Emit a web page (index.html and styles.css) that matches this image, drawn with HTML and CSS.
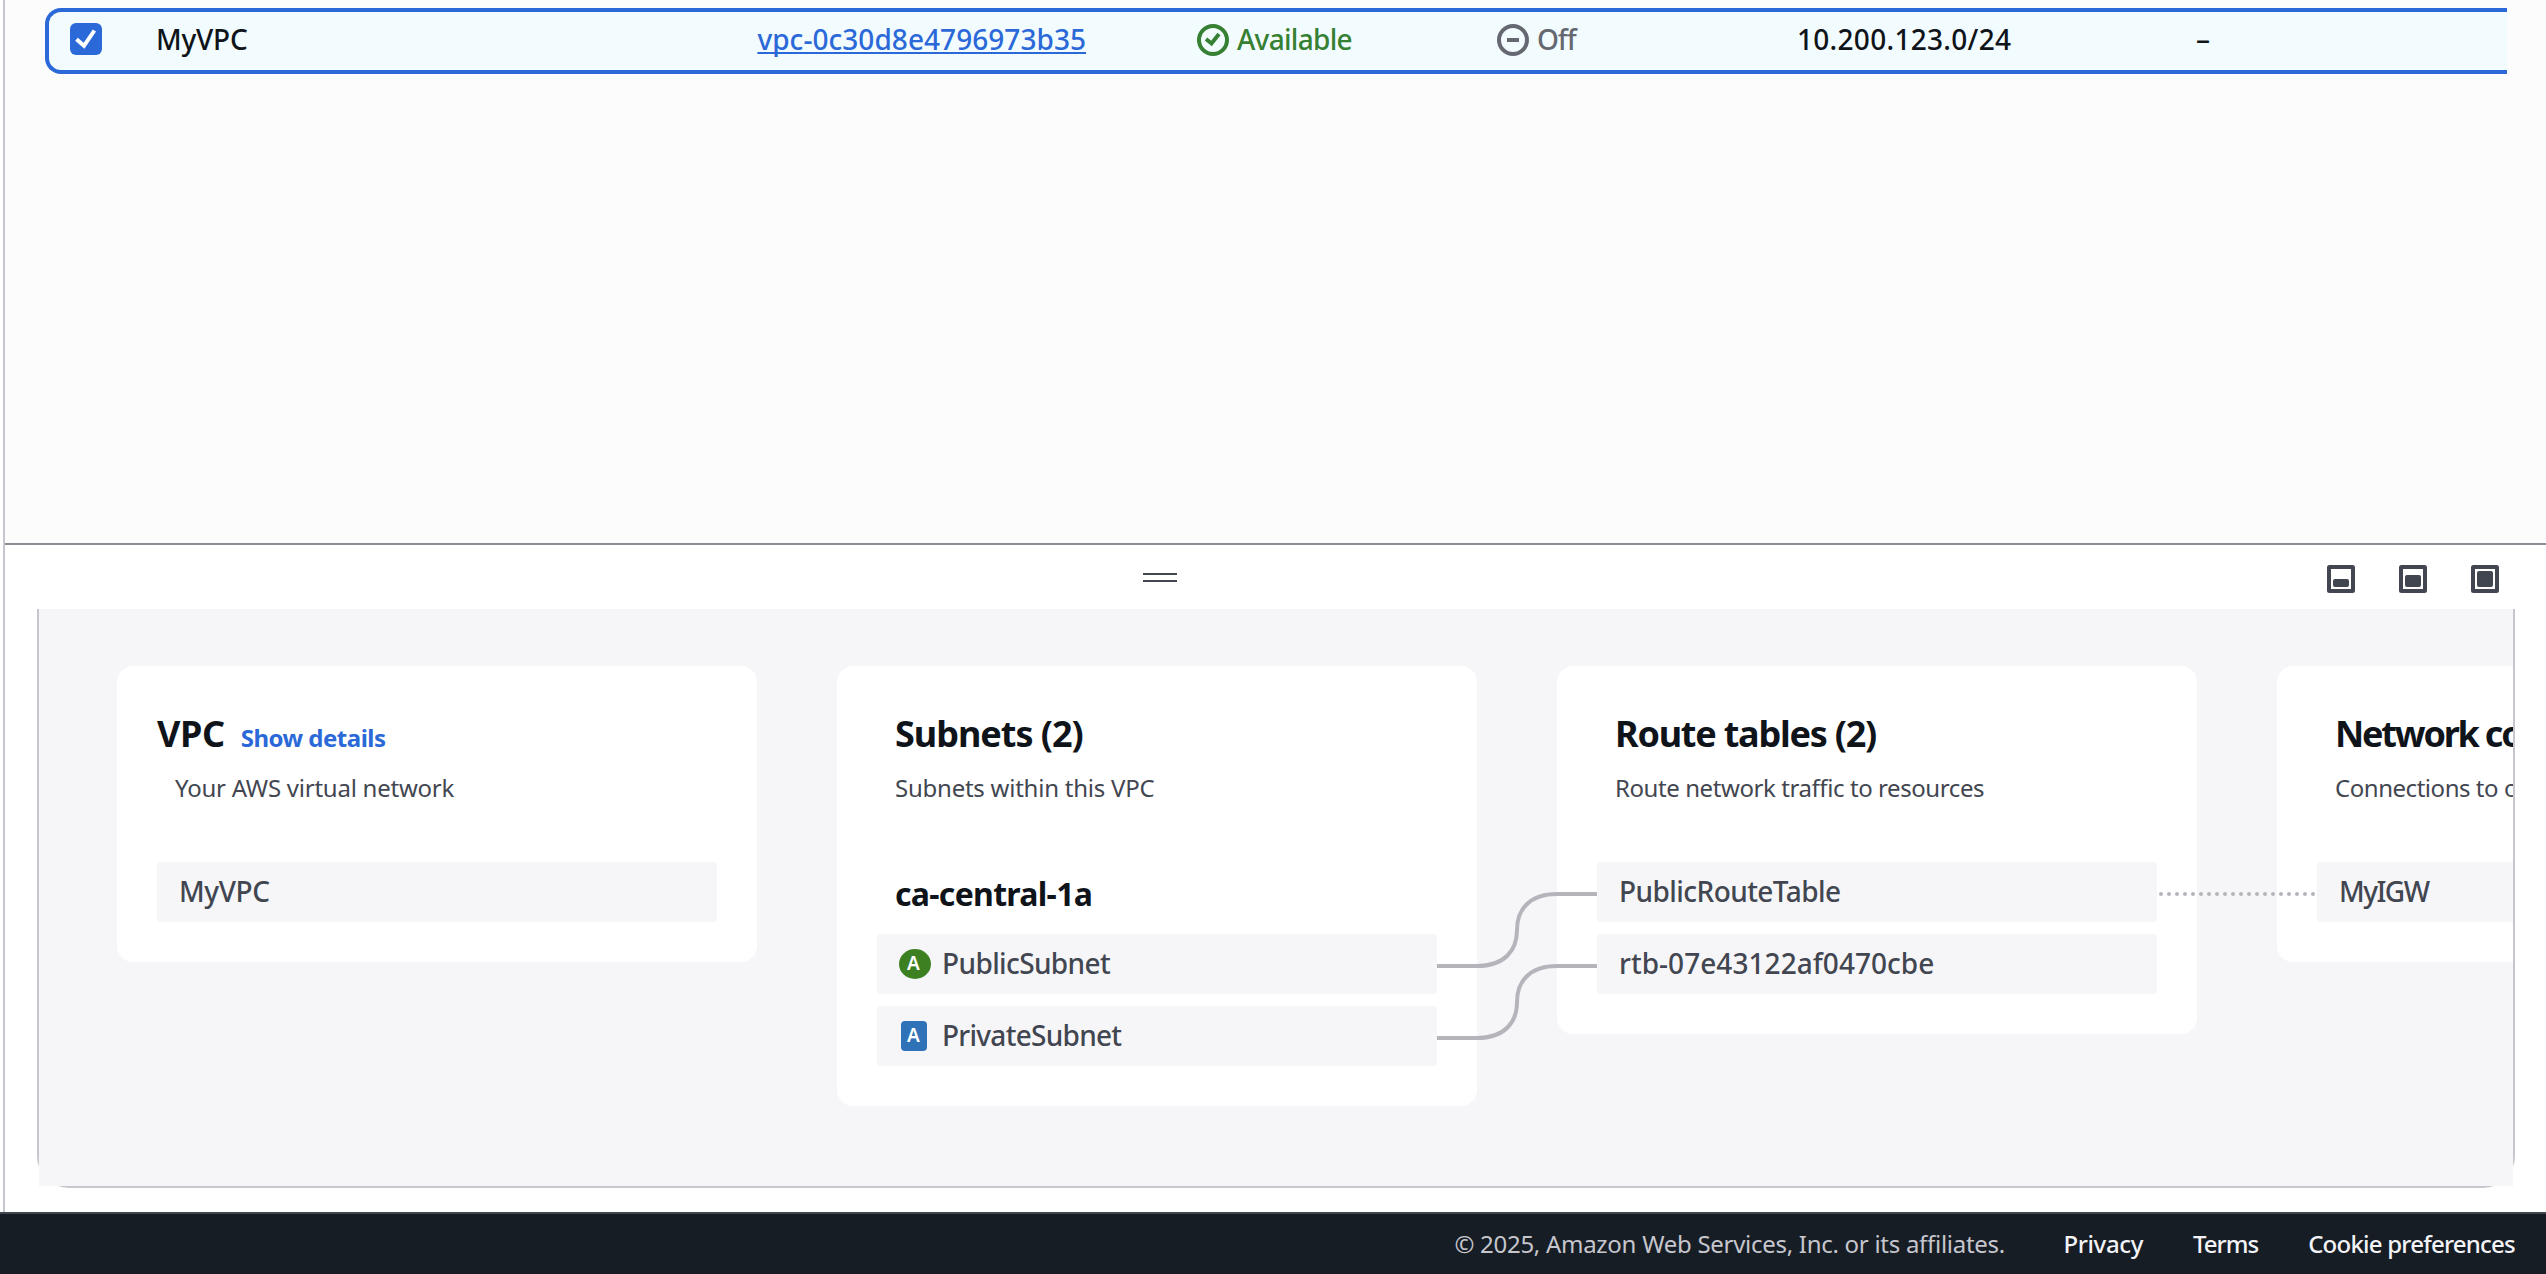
FILE: index.html
```html
<!DOCTYPE html>
<html lang="en">
<head>
<meta charset="utf-8">
<title>VPC console</title>
<link rel="stylesheet" href="styles.css">
</head>
<body>
<div class="app">
  <div class="main">
    <section class="table-area">
      <div class="row">
        <span class="checkbox"><svg width="32" height="32" viewBox="0 0 32 32"><path d="M6.5 16.2 14 22.8 24.4 7.5" fill="none" stroke="#fff" stroke-width="4"/></svg></span>
        <span class="t-name">MyVPC</span>
        <a class="link t-id">vpc-0c30d8e4796973b35</a>
        <span class="status ok"><svg width="32" height="32" viewBox="0 0 32 32" fill="none" stroke="currentColor" stroke-width="4"><circle cx="16" cy="16" r="14"/><path d="M9 15 14.5 19.5 22 10"/></svg><span class="t-ok">Available</span></span>
        <span class="status off"><svg width="32" height="32" viewBox="0 0 32 32" fill="none" stroke="currentColor" stroke-width="4"><circle cx="16" cy="16" r="14"/><path d="M10 16H22"/></svg><span class="t-off">Off</span></span>
        <span class="t-cidr">10.200.123.0/24</span>
        <span>–</span>
      </div>
    </section>
    <section class="panel">
      <div class="toolbar">
        <div class="handle"></div>
        <svg class="size-icon" viewBox="0 0 28 28"><rect x="2" y="2" width="24" height="24" rx=".5"/><rect class="fill" x="6" y="14" width="16" height="8" rx="2"/></svg>
        <svg class="size-icon" viewBox="0 0 28 28"><rect x="2" y="2" width="24" height="24" rx=".5"/><rect class="fill" x="6" y="10" width="16" height="12" rx="2"/></svg>
        <svg class="size-icon" viewBox="0 0 28 28"><rect x="2" y="2" width="24" height="24" rx=".5"/><rect class="fill" x="6" y="6" width="16" height="16" rx="2"/></svg>
      </div>
      <div class="frame">
        <div class="map">
          <article class="card vpc">
            <h2 class="t-vpc">VPC <a class="details">Show details</a></h2>
            <p class="t-vpcdesc">Your AWS virtual network</p>
            <div class="list"><div class="item t-plain">MyVPC</div></div>
          </article>
          <article class="card">
            <h2 class="t-subnets">Subnets (2)</h2>
            <p>Subnets within this VPC</p>
            <h3>ca-central-1a</h3>
            <div class="list zone">
              <div class="item icon"><span class="badge public">A</span><span class="t-public">PublicSubnet</span></div>
              <div class="item icon"><span class="badge private">A</span><span class="t-private">PrivateSubnet</span></div>
            </div>
          </article>
          <article class="card">
            <h2 class="t-routes">Route tables (2)</h2>
            <p class="t-routedesc">Route network traffic to resources</p>
            <div class="list"><div class="item t-prt">PublicRouteTable</div><div class="item t-rtb">rtb-07e43122af0470cbe</div></div>
          </article>
          <article class="card">
            <h2 class="t-network">Network co</h2>
            <p class="t-netdesc">Connections to o</p>
            <div class="list"><div class="item t-igw">MyIGW</div></div>
          </article>
          <svg class="links" width="2474" height="577" viewBox="39 609 2474 577">
            <path d="M1437 966H1477C1505 966 1517 950 1517 930C1517 910 1529 894 1557 894H1597"/>
            <path d="M1437 1038H1477C1505 1038 1517 1022 1517 1002C1517 982 1529 966 1557 966H1597"/>
            <path class="dotted" d="M2161 894H2314"/>
          </svg>
        </div>
      </div>
    </section>
  </div>
  <footer>
    <span class="copy">© 2025, Amazon Web Services, Inc. or its affiliates.</span>
    <a class="t-privacy">Privacy</a><a class="t-terms">Terms</a><a class="t-cookie">Cookie preferences</a>
  </footer>
</div>
</body>
</html>
```
FILE: styles.css
```css
* { box-sizing: border-box; }
body { margin: 0; background: #fff; color: #0f141a; font: 500 28px/40px "Noto Sans", "Open Sans", sans-serif; white-space: nowrap; }
svg { display: block; flex: none; }
.app { width: 2546px; height: 1274px; display: flex; flex-direction: column; overflow: hidden; }
.main { height: 1212px; margin-left: 3px; border-left: 2px solid #c6c6cd; display: flex; flex-direction: column; }

.table-area { height: 545px; padding: 8px 39px 0 40px; background: #fcfcfd; border-bottom: 2px solid #8c8c94; }
.row { height: 66px; display: grid; grid-template-columns: 86px 601.4px 439.6px 300px 300px 399px 1fr; align-items: center; padding: 0 0 4px 21px; background: #f2fcff; border: 4px solid #2b69d9; border-right: 0; border-radius: 16px 0 0 16px; }
.checkbox { width: 32px; height: 32px; border-radius: 6px; background: #2b69d9; }
.link { color: #2b69d9; text-decoration: underline; text-decoration-thickness: 2px; text-underline-offset: 2px; text-decoration-skip-ink: none; justify-self: start; }
.status { display: flex; align-items: center; gap: 8px; }
.status svg { position: relative; top: 1px; }
.ok { color: #368033; }
.off { color: #656871; }

.panel { flex: 1; background: #fff; }
.toolbar { height: 64px; display: flex; align-items: flex-start; gap: 44px; padding: 20px 47px 0 1138px; }
.handle { width: 34px; height: 9px; margin: 8px auto 0 0; border: solid #424650; border-width: 2px 0; }
.size-icon { width: 28px; height: 28px; fill: none; stroke: #424650; stroke-width: 4; }
.size-icon .fill { fill: #424650; stroke: none; }

.frame { width: 2478px; height: 579px; margin-left: 32px; border: 2px solid #c6c6cd; border-top: 0; border-radius: 0 0 32px 32px; }
.map { position: relative; height: 577px; padding: 57px 0 0 78px; display: flex; align-items: flex-start; gap: 80px; overflow: hidden; background: #f6f6f9; }
.links { position: absolute; left: 0; top: 0; fill: none; stroke: #b4b4bb; stroke-width: 4; }
.dotted { stroke-dasharray: 0 8; stroke-linecap: round; }
.card { flex: 0 0 640px; padding: 44px 40px 40px; border-radius: 16px; background: #fff; }
h2, h3, p { margin: 0 0 0 18px; }
h2 { height: 48px; font-size: 36px; line-height: 48px; font-weight: 700; }
h3 { margin-top: 70px; font-size: 32px; line-height: 40px; font-weight: 700; letter-spacing: -.7px; }
p { margin-top: 14px; font-size: 24px; font-weight: 400; line-height: 32px; color: #424650; letter-spacing: -.24px; }
.vpc h2 { margin-left: 0; display: flex; align-items: baseline; }
.vpc p { margin-left: 18px; }
.details { margin-left: 16px; font-size: 24px; letter-spacing: -.5px; color: #2b69d9; }
.list { margin-top: 58px; display: flex; flex-direction: column; gap: 12px; }
.zone { margin-top: 20px; }
.item { height: 60px; display: flex; align-items: center; padding: 0 22px 2px; border-radius: 4px; background: #f6f6f9; color: #424650; }
.badge { width: 32px; height: 30px; flex: none; margin-right: 11px; border-radius: 50%; color: #fff; font-size: 19px; line-height: 29px; font-weight: 600; text-align: center; position: relative; top: 1px; padding-right: 3px; }
.public { background: #3d8022; }
.private { width: 26px; margin: 0 15px 0 2px; border-radius: 4px; padding-right: 1px; background: #3072b8; }

footer { height: 62px; display: flex; padding: 10px 31px 0 0; justify-content: flex-end; border-top: 2px solid #424650; background: #171d25; color: #fff; font-size: 24px; font-weight: 400; line-height: 40px; }
footer a { color: #f3f3f7; font-weight: 500; }
.copy { color: #c6c6cd; letter-spacing: -.28px; margin-right: 58.5px; }

.t-name { letter-spacing: -.2px; }
.t-id { letter-spacing: .05px; }
.t-ok { letter-spacing: -.7px; }
.t-off { letter-spacing: -1.1px; }
.t-cidr { letter-spacing: .3px; }
.t-vpc { letter-spacing: -.38px; }
.t-subnets { letter-spacing: -1.02px; }
.t-plain { letter-spacing: -.4px; }
.t-public { letter-spacing: -.62px; }
.t-private { letter-spacing: -.72px; }
.t-routes { letter-spacing: -1.22px; }
.t-routedesc { letter-spacing: -.42px; }
.t-prt { letter-spacing: -.56px; }
.t-rtb { letter-spacing: .05px; }
.t-network { letter-spacing: -2.2px; }
.t-netdesc { letter-spacing: -.46px; }
.t-igw { letter-spacing: -1.51px; }
.t-privacy { letter-spacing: -.37px; margin-right: 50px; }
.t-terms { letter-spacing: -.99px; margin-right: 50px; }
.t-cookie { letter-spacing: -.78px; }
```
